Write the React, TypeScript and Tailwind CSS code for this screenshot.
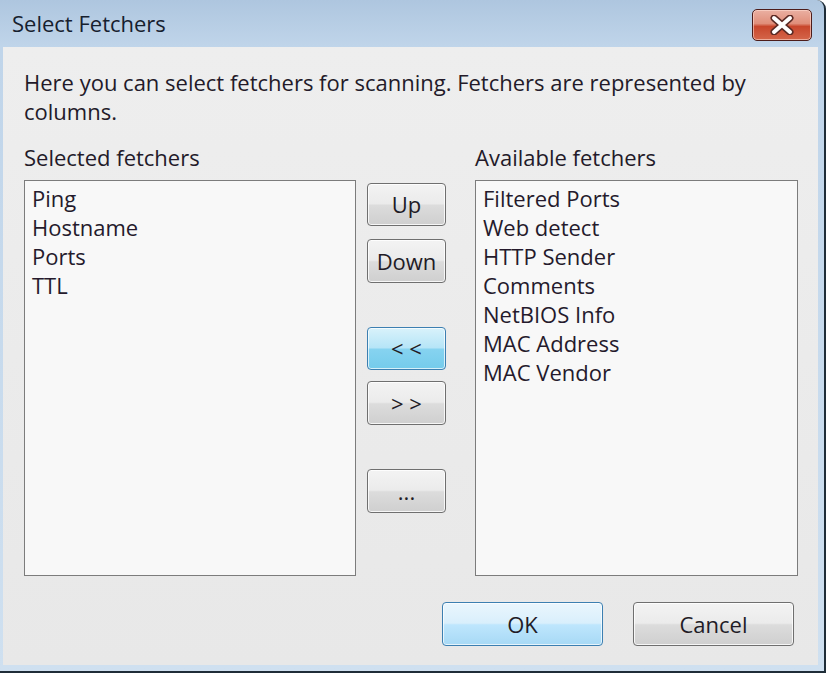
import React from 'react'

const selected = ['Ping', 'Hostname', 'Ports', 'TTL']
const available = [
  'Filtered Ports',
  'Web detect',
  'HTTP Sender',
  'Comments',
  'NetBIOS Info',
  'MAC Address',
  'MAC Vendor',
]

function GrayButton({ label, className = '' }: { label: string; className?: string }) {
  return (
    <button
      className={`flex items-center justify-center rounded-[4px] border border-[#6f6f6f] bg-[linear-gradient(to_bottom,#f3f3f3_0%,#ebebeb_48%,#dcdcdc_52%,#cfcfcf_100%)] text-[22px] text-[#221b26] shadow-[inset_0_0_0_1px_rgba(255,255,255,0.8)] ${className}`}
    >
      {label}
    </button>
  )
}

function BlueButton({ label, className = '' }: { label: string; className?: string }) {
  return (
    <button
      className={`flex items-center justify-center rounded-[4px] border border-[#3c7fb1] text-[22px] text-[#221b26] shadow-[inset_0_0_0_1px_rgba(255,255,255,0.7)] ${className}`}
    >
      {label}
    </button>
  )
}

function ListBox({ items, className = '' }: { items: string[]; className?: string }) {
  return (
    <div
      className={`h-[396px] border border-[#7c7c7c] bg-[#f8f8f8] pl-[7px] pt-[3px] text-[22px] leading-[29px] text-[#251a2c] ${className}`}
    >
      {items.map((it) => (
        <div key={it}>{it}</div>
      ))}
    </div>
  )
}

export default function App() {
  return (
    <div className="w-[830px] h-[678px] overflow-hidden bg-white" style={{ fontFamily: '"Open Sans", "Noto Sans", sans-serif' }}>
      <div className="flex h-[673px] w-[826px] flex-col rounded-tr-[9px] border-r-2 border-b-2 border-[#1f2d38] bg-[linear-gradient(to_bottom,#aec6df_0px,#c0d5ea_47px,#cfe0f0_100%)]">
        {/* title bar */}
        <div className="flex h-[47px] items-center justify-between pl-[12px] pr-[12px]">
          <span className="text-[22px] text-[#16202e]">Select Fetchers</span>
          <div className="mt-[2px] flex h-[32px] w-[60px] items-center justify-center rounded-[5px] border border-[#4d1d1a] bg-[linear-gradient(to_bottom,#eab0a2_0%,#e08e7a_45%,#c8462c_55%,#d4664a_100%)] shadow-[inset_0_0_0_1px_rgba(255,220,210,0.6)]">
            <svg width="26" height="20" viewBox="0 0 26 20">
              <path d="M5 3 L21 17 M21 3 L5 17" stroke="#5a2a24" strokeWidth="7" strokeLinecap="round" />
              <path d="M5 3 L21 17 M21 3 L5 17" stroke="#ffffff" strokeWidth="4" strokeLinecap="round" />
            </svg>
          </div>
        </div>

        {/* client area */}
        <div className="ml-[3px] mr-[6px] mb-[6px] flex-1 bg-[linear-gradient(to_bottom,#eeeeee,#e8e8e8)] pl-[21px] pt-[21px] text-[#231a29]">
          <p className="w-[745px] text-[22px] leading-[29px]">
            Here you can select fetchers for scanning. Fetchers are represented by columns.
          </p>

          <div className="mt-[17px] flex text-[22px] leading-[29px]">
            <div className="w-[451px]">Selected fetchers</div>
            <div>Available fetchers</div>
          </div>

          <div className="mt-[8px] flex">
            <ListBox items={selected} className="w-[332px]" />

            <div className="ml-[11px] mr-[29px] flex w-[79px] flex-col pt-[3px]">
              <GrayButton label="Up" className="h-[43px]" />
              <GrayButton label="Down" className="mt-[13px] h-[44px]" />
              <BlueButton
                label="< <"
                className="mt-[44px] h-[43px] bg-[linear-gradient(to_bottom,#d9f2fb_0%,#b6e5f7_48%,#86d3f0_52%,#74cbeb_100%)] shadow-[0_0_4px_#7fd6f3]"
              />
              <GrayButton label="> >" className="mt-[11px] h-[44px]" />
              <GrayButton label="..." className="mt-[44px] h-[44px]" />
            </div>

            <ListBox items={available} className="w-[323px]" />
          </div>

          <div className="mt-[26px] flex pl-[418px]">
            <BlueButton
              label="OK"
              className="h-[44px] w-[161px] bg-[linear-gradient(to_bottom,#eaf6fd_0%,#d9effc_48%,#bee6fd_52%,#a7d9f5_100%)]"
            />
            <GrayButton label="Cancel" className="ml-[30px] h-[44px] w-[161px]" />
          </div>
        </div>
      </div>
    </div>
  )
}
